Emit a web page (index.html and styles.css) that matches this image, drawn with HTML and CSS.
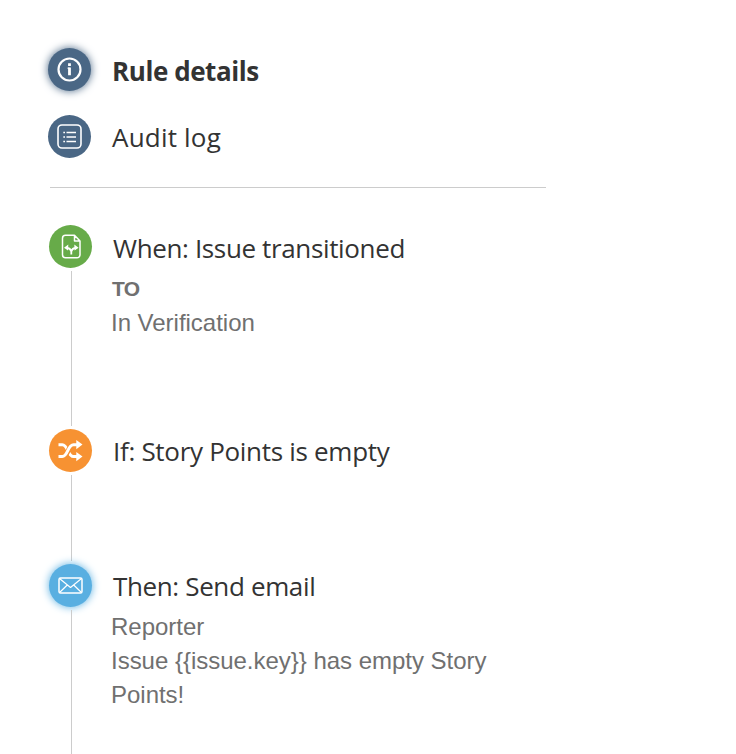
FILE: index.html
```html
<!DOCTYPE html>
<html lang="en">
<head>
    <meta charset="UTF-8">
    <meta name="viewport" content="width=device-width, initial-scale=1.0">
    <title>Rule details</title>
    <link rel="stylesheet" href="styles.css">
</head>
<body>
    <div class="rule-sidebar">
        <div class="rule-menu">
            <a class="menu-item active">
                <span class="icon icon-details">
                    <svg viewBox="0 0 43 43" fill="none" stroke="white">
                        <circle cx="21.5" cy="21.5" r="11" stroke-width="2.2"/>
                        <path d="M21.5 15.3v2.6M21.5 19.5v7.7" stroke-width="2.8"/>
                        <path d="M19.6 20.2h2" stroke-width="1.3"/>
                    </svg>
                </span>
                <span class="menu-label">Rule details</span>
            </a>
            <a class="menu-item">
                <span class="icon icon-log">
                    <svg viewBox="0 0 43 43" fill="none" stroke="white">
                        <rect x="10" y="10" width="23" height="23" rx="4" stroke-width="1.6"/>
                        <path d="M15.3 17.5h1.7M15.3 22h1.7M15.3 26.5h1.7M18.5 17.5h9.5M18.5 22h9.5M18.5 26.5h9.5" stroke-width="1.5"/>
                    </svg>
                </span>
                <span class="menu-label">Audit log</span>
            </a>
        </div>

        <div class="steps">
            <div class="step step-trigger">
                <div class="step-rail">
                    <span class="icon icon-trigger">
                        <svg viewBox="0 0 43 43" fill="none" stroke="white" stroke-linejoin="round">
                            <path d="M25.5 10.2H16.5a3 3 0 0 0-3 3v16.6a3 3 0 0 0 3 3h11.5a3 3 0 0 0 3-3V16zM25.5 10.2V16H31" stroke-width="1.5"/>
                            <path d="M22.3 29.6v-3q-.8-3.6-4.8-3.6M22.3 26.6q.8-3.6 4.8-3.6" stroke-width="1.8"/>
                            <path d="M15 22.8l4.3-3.2-.3 6zM29.6 22.8l-4.3-3.2.3 6z" fill="white" stroke="none"/>
                        </svg>
                    </span>
                    <span class="line"></span>
                </div>
                <div class="step-content">
                    <div class="step-title">When: Issue transitioned</div>
                    <div class="step-text"><strong>TO</strong></div>
                    <div class="step-text">In Verification</div>
                </div>
            </div>

            <div class="step step-condition">
                <div class="step-rail">
                    <span class="icon icon-condition">
                        <svg viewBox="0 0 43 43" fill="none" stroke="white" stroke-width="3">
                            <path d="M9.5 15.7h3.8c5.8 0 5.2 11.8 11.2 11.8h4"/>
                            <path d="M14.5 27.5c5.2-1 4.2-11.8 10-11.8" stroke="#f79232" stroke-width="5"/>
                            <path d="M9.5 27.5h3.8c5.8 0 5.2-11.8 11.2-11.8h4"/>
                            <path d="M27.3 11l6.2 4.6-6.2 4.6zM27.3 23l6.2 4.6-6.2 4.6z" fill="white" stroke="none"/>
                        </svg>
                    </span>
                    <span class="line"></span>
                </div>
                <div class="step-content">
                    <div class="step-title">If: Story Points is empty</div>
                </div>
            </div>

            <div class="step step-action">
                <div class="step-rail">
                    <span class="icon icon-action">
                        <svg viewBox="0 0 43 43" fill="none" stroke="white" stroke-linejoin="round">
                            <rect x="10" y="14" width="23" height="15" rx="1.5" stroke-width="1.5"/>
                            <path d="M10.8 14.8l10.7 8.7 10.7-8.7M10.8 28.3l7.5-7.3M32.2 28.3l-7.5-7.3" stroke-width="1.2"/>
                        </svg>
                    </span>
                    <span class="line"></span>
                </div>
                <div class="step-content">
                    <div class="step-title">Then: Send email</div>
                    <div class="step-text">Reporter</div>
                    <div class="step-text">Issue {{issue.key}} has empty Story Points!</div>
                </div>
            </div>
        </div>
    </div>
</body>
</html>
```

FILE: styles.css
```css
body {
    margin: 0;
    height: 754px;
    overflow: hidden;
    font-family: "Liberation Sans", Arial, sans-serif;
    background: white;
    color: #333;
}

.rule-sidebar {
    width: 498px;
    padding: 48px 0 0 48px;
}

.rule-menu {
    display: flex;
    flex-direction: column;
    gap: 24px;
    margin-left: 2px;
    padding-bottom: 29px;
    border-bottom: 1px solid #ccc;
}

.menu-item {
    display: flex;
    gap: 21px;
    height: 43px;
    margin-left: -2px;
}

.menu-label,
.step-title {
    font-family: "Segoe UI", "Open Sans", "Noto Sans", sans-serif;
    font-size: 26px;
    line-height: 36px;
    white-space: nowrap;
}

.menu-label {
    padding-top: 4px;
    letter-spacing: 0.2px;
}

.active .menu-label {
    padding-top: 5px;
    font-weight: bold;
    letter-spacing: -0.43px;
}

.icon {
    display: block;
    flex-shrink: 0;
    width: 43px;
    height: 43px;
    border-radius: 50%;
}

.icon svg {
    display: block;
    width: 43px;
    height: 43px;
}

.icon-details,
.icon-log {
    background: #4a6785;
}

.icon-details {
    box-shadow: 0 0 8px #4a6785;
}

.icon-trigger {
    background: #67ab49;
}

.icon-condition {
    background: #f79232;
}

.icon-action {
    background: #59afe1;
    box-shadow: 0 0 8px #59afe1;
}

.steps {
    padding: 37px 0 0 1px;
}

.step {
    display: flex;
    gap: 19px;
}

.step-trigger {
    height: 204px;
}

.step-condition {
    height: 135px;
}

.step-action {
    height: 200px;
}

.step-rail {
    display: flex;
    flex-direction: column;
    align-items: center;
}

.line {
    flex: 1;
    width: 1px;
    margin: 3px 0 3px 2px;
    background: #ccc;
}

.step-title {
    margin-left: 2px;
    padding-top: 4px;
    margin-bottom: 6px;
    letter-spacing: -0.36px;
}

.step-trigger .step-title {
    padding-top: 5px;
    margin-bottom: 5px;
}

.step-condition .step-title {
    letter-spacing: -0.3px;
}

.step-text {
    width: 400px;
    font-size: 24px;
    line-height: 34px;
    letter-spacing: -0.02px;
    color: #707070;
}

.step-text strong {
    margin-left: 1px;
    font-size: 21px;
    letter-spacing: -0.8px;
}
```
